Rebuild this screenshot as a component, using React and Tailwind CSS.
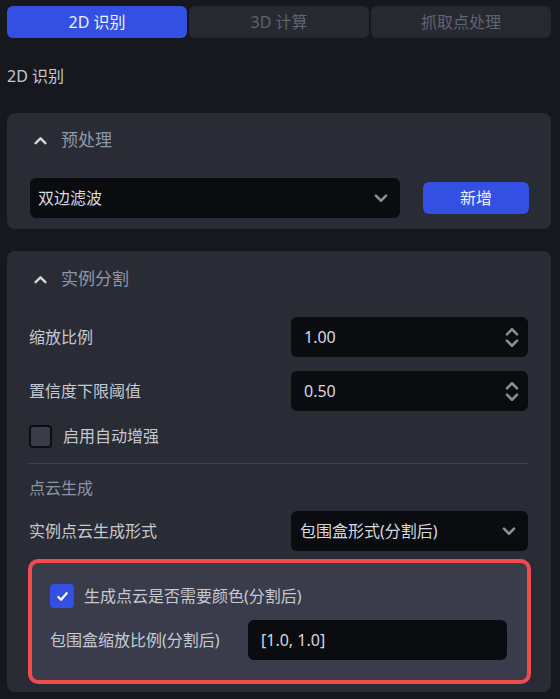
import React from "react";

const font = { fontFamily: '"Noto Sans", "Noto Sans CJK SC", sans-serif' };

function ChevUp({ className = "" }) {
  return (
    <svg viewBox="0 0 12 8" className={className} fill="none" stroke="currentColor" strokeWidth="2.2" strokeLinecap="round" strokeLinejoin="round">
      <path d="M1.5 6.5L6 2l4.5 4.5" />
    </svg>
  );
}
function ChevDown({ className = "" }) {
  return (
    <svg viewBox="0 0 12 8" className={className} fill="none" stroke="currentColor" strokeWidth="2.2" strokeLinecap="round" strokeLinejoin="round">
      <path d="M1.5 1.5L6 6l4.5-4.5" />
    </svg>
  );
}

function NumberInput({ value }) {
  return (
    <div className="w-[237px] h-[40px] rounded-md bg-[#0b0c10] flex items-center pl-[13px] pr-[9px]">
      <span className="flex-1 text-[16px] text-[#d6d9e0]">{value}</span>
      <div className="flex flex-col items-center gap-[3px] text-[#8a8e9a]">
        <ChevUp className="w-[14px] h-[9px]" />
        <ChevDown className="w-[14px] h-[9px]" />
      </div>
    </div>
  );
}

function Header({ title }) {
  return (
    <div className="flex items-center h-[20px]">
      <ChevUp className="w-[13px] h-[9px] text-[#d4d7de] ml-[5px]" />
      <span className="ml-[14px] text-[17px] text-[#8b98ad]">{title}</span>
    </div>
  );
}

export default function App() {
  return (
    <div className="w-[560px] h-[699px] bg-[#17181e] pl-[7px] pr-[9px] overflow-hidden" style={font}>
      {/* Tabs */}
      <div className="pt-[6px] grid grid-cols-3 gap-[2px] h-[38px]">
        <div className="rounded-md bg-[#3450e2] flex items-center justify-center text-[16px] text-[#eef0ff]">2D 识别</div>
        <div className="rounded-md bg-[#272931] flex items-center justify-center text-[16px] text-[#5f6474]">3D 计算</div>
        <div className="rounded-md bg-[#272931] flex items-center justify-center text-[16px] text-[#5f6474]">抓取点处理</div>
      </div>

      <div className="h-[75px] flex items-center pt-[1px] text-[16px] text-[#c4c9d2]">2D 识别</div>

      {/* Card 1 */}
      <div className="rounded-lg bg-[#2a2c35] h-[116px] px-[22px] pt-[17px]">
        <Header title="预处理" />
        <div className="mt-[28px] flex items-center">
          <div className="ml-[1px] w-[370px] h-[40px] rounded-md bg-[#0b0c10] flex items-center pl-[8px] pr-[12px]">
            <span className="flex-1 text-[16px] text-[#d6d9e0]">双边滤波</span>
            <ChevDown className="w-[14px] h-[9px] text-[#8a8e9a]" />
          </div>
          <div className="ml-[23px] w-[106px] h-[32px] rounded-md bg-[#3450e2] flex items-center justify-center text-[16px] text-[#eef0ff]">新增</div>
        </div>
      </div>

      {/* Card 2 */}
      <div className="mt-[22px] rounded-lg bg-[#2a2c35] h-[441px] pl-[22px] pr-[23px] pt-[18px]">
        <Header title="实例分割" />
        <div className="mt-[28px] flex items-center justify-between">
          <span className="text-[16px] text-[#c4c9d2]">缩放比例</span>
          <NumberInput value="1.00" />
        </div>
        <div className="mt-[14px] flex items-center justify-between">
          <span className="text-[16px] text-[#c4c9d2]">置信度下限阈值</span>
          <NumberInput value="0.50" />
        </div>
        <div className="mt-[13px] flex items-center">
          <div className="w-[23px] h-[23px] rounded-[4px] bg-[#3a3c4a] border-2 border-[#0d0e12]" />
          <span className="ml-[11px] text-[16px] text-[#c4c9d2]">启用自动增强</span>
        </div>
        <div className="mt-[15px] h-px bg-[#40434f]" />
        <div className="mt-[14px] text-[16px] text-[#8a94a6] leading-[20px]">点云生成</div>
        <div className="mt-[13px] flex items-center justify-between">
          <span className="text-[16px] text-[#c4c9d2]">实例点云生成形式</span>
          <div className="w-[237px] h-[40px] rounded-md bg-[#0b0c10] flex items-center pl-[9px] pr-[12px]">
            <span className="flex-1 text-[16px] text-[#d6d9e0]">包围盒形式(分割后)</span>
            <ChevDown className="w-[14px] h-[9px] text-[#8a8e9a]" />
          </div>
        </div>
        <div className="mt-[8px] -ml-[1px] -mr-[3px] h-[125px] rounded-[10px] border-4 border-[#f24b4b] bg-[#3a3c4b] pl-[18px] pr-[20px] pt-[21px]">
          <div className="flex items-center">
            <div className="w-[24px] h-[24px] rounded-[4px] bg-[#3450e2] flex items-center justify-center">
              <svg viewBox="0 0 14 14" className="w-[13px] h-[13px]" fill="none" stroke="white" strokeWidth="2.4" strokeLinecap="round" strokeLinejoin="round">
                <path d="M2.5 7.5l3 3 6-7" />
              </svg>
            </div>
            <span className="ml-[10px] text-[16px] text-[#c4c9d2]">生成点云是否需要颜色(分割后)</span>
          </div>
          <div className="mt-[12px] flex items-center justify-between">
            <span className="text-[16px] text-[#c4c9d2]">包围盒缩放比例(分割后)</span>
            <div className="w-[259px] h-[40px] rounded-md bg-[#0b0c10] flex items-center pl-[13px]">
              <span className="text-[16px] text-[#d6d9e0]">[1.0, 1.0]</span>
            </div>
          </div>
        </div>
      </div>
    </div>
  );
}
